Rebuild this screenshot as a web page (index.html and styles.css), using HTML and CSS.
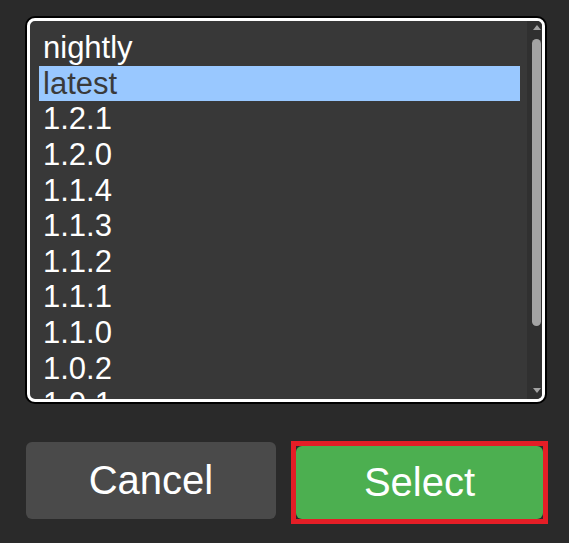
FILE: index.html
```html
<!DOCTYPE html>
<html lang="en">
<head>
  <meta charset="UTF-8">
  <meta name="viewport" content="width=device-width, initial-scale=1.0">
  <title>Select version</title>
  <link rel="stylesheet" href="styles.css">
</head>
<body>
  <div class="dialog">
    <div class="listbox">
      <div class="versions" role="listbox">
        <div class="version">nightly</div>
        <div class="version selected">latest</div>
        <div class="version">1.2.1</div>
        <div class="version">1.2.0</div>
        <div class="version">1.1.4</div>
        <div class="version">1.1.3</div>
        <div class="version">1.1.2</div>
        <div class="version">1.1.1</div>
        <div class="version">1.1.0</div>
        <div class="version">1.0.2</div>
        <div class="version">1.0.1</div>
        <div class="version">1.0.0</div>
      </div>
      <div class="scrollbar">
        <div class="arrow up"></div>
        <div class="thumb"></div>
        <div class="arrow down"></div>
      </div>
    </div>
    <div class="actions">
      <button class="btn cancel">Cancel</button>
      <div class="focus-ring">
        <button class="btn select">Select</button>
      </div>
    </div>
  </div>
</body>
</html>
```

FILE: styles.css
```css
html, body {
  margin: 0;
  background-color: #2a2a2a;
}
body {
  font-family: "Liberation Sans", Arial, sans-serif;
  color: #fff;
}
.dialog {
  padding: 18px 0 0 26px;
}
.listbox {
  box-sizing: border-box;
  display: flex;
  width: 518px;
  height: 384px;
  margin-left: 1px;
  background-color: #383838;
  border: 3px solid #fff;
  border-radius: 8px;
  box-shadow: 0 0 0 2px #000;
  overflow: hidden;
}
.versions {
  flex: 1;
  padding: 9px 7px 0 9px;
  overflow: hidden;
}
.version {
  font-size: 31px;
  line-height: 1.15;
  padding: 0 4px;
  white-space: nowrap;
}
.version.selected {
  background-color: #99c8ff;
  color: #3a3a3a;
}

/* fake scrollbar, the headless browser hides the real one */
.scrollbar {
  width: 15px;
  padding-left: 4px;
  box-sizing: border-box;
  background-color: #303030;
  display: flex;
  flex-direction: column;
  align-items: center;
}
.arrow {
  width: 0;
  height: 0;
  border-left: 4px solid transparent;
  border-right: 4px solid transparent;
}
.arrow.up {
  margin-top: 4px;
  border-bottom: 5px solid #a3a3a3;
}
.arrow.down {
  margin-top: auto;
  margin-bottom: 6px;
  border-top: 5px solid #a3a3a3;
}
.thumb {
  width: 9px;
  height: 287px;
  margin-top: 9px;
  border-radius: 5px;
  background-color: #a3a3a3;
}

.actions {
  display: flex;
  align-items: flex-start;
  gap: 15px;
  margin-top: 39px;
}
.btn {
  font-family: "Liberation Sans", Arial, sans-serif;
  font-size: 40px;
  color: #fff;
  border: none;
  border-radius: 6px;
  cursor: pointer;
}
.cancel {
  width: 250px;
  height: 77px;
  margin-top: 1px;
  background-color: #4a4a4a;
}
.focus-ring {
  border: 5px solid #e41e26;
  display: flex;
}
.select {
  width: 247px;
  height: 73px;
  background-color: #4caf50;
}
```
